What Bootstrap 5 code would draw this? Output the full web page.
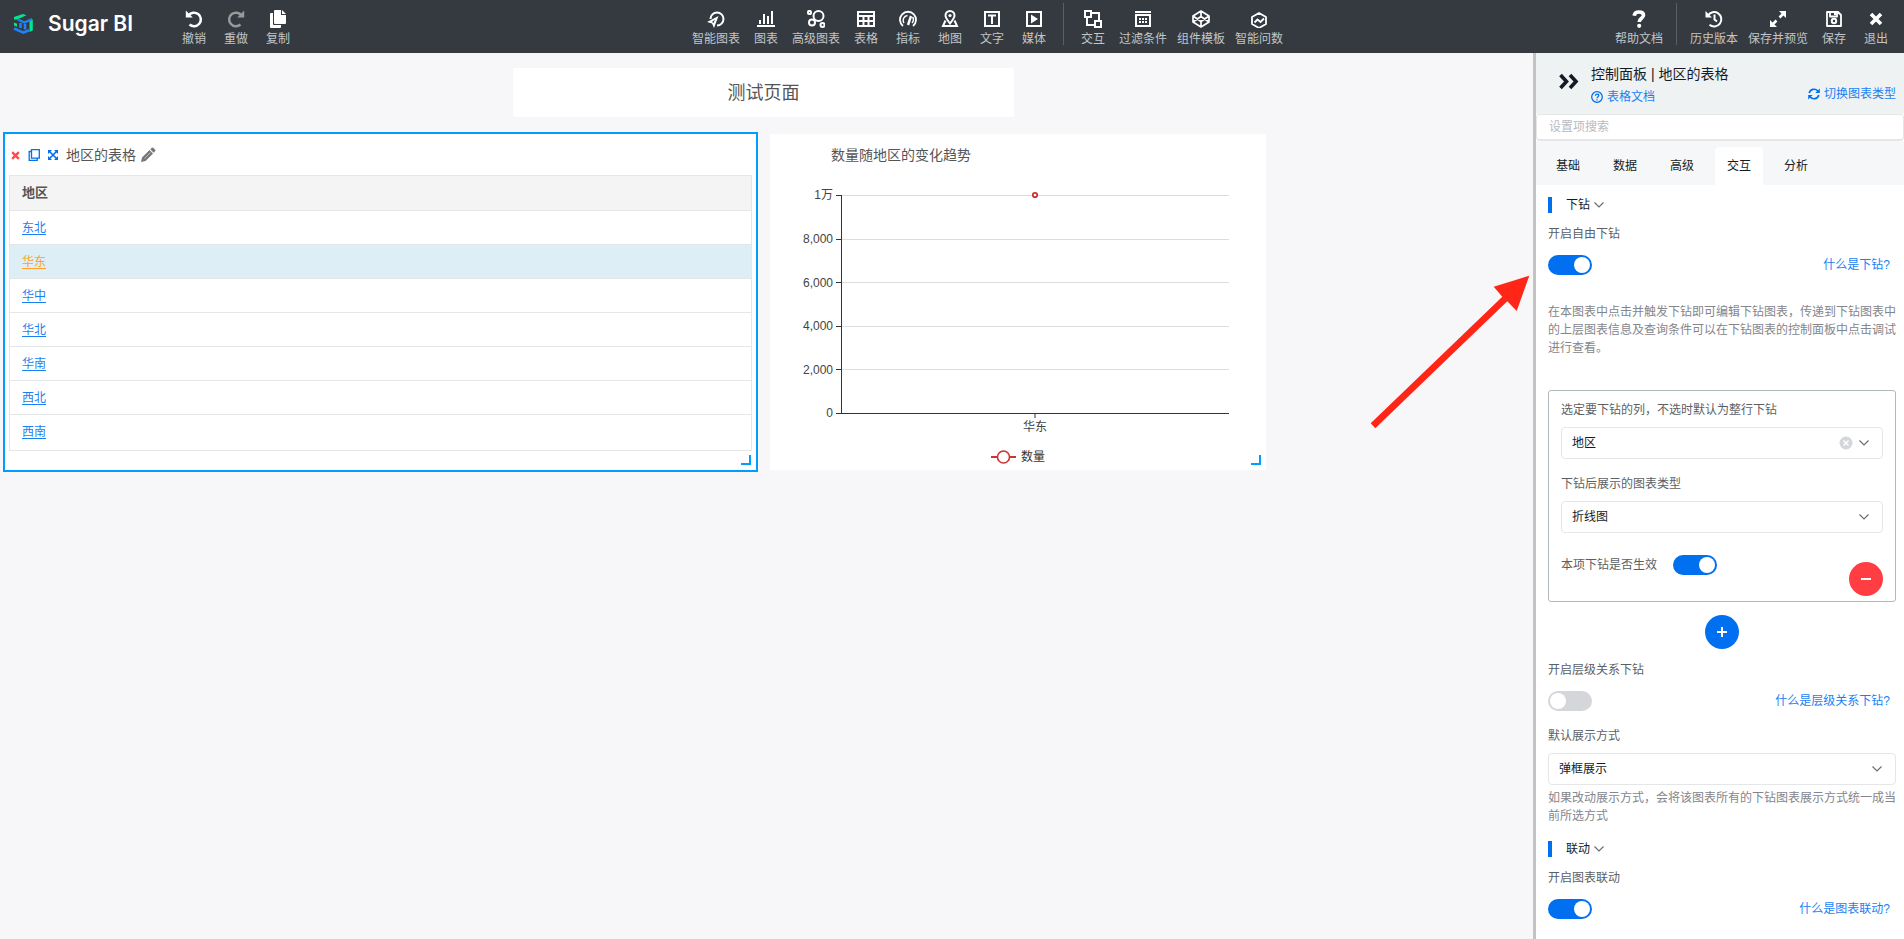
<!DOCTYPE html>
<html lang="zh-CN">
<head>
<meta charset="utf-8">
<meta name="viewport" content="width=device-width, initial-scale=1">
<title>Sugar BI</title>
<link href="https://cdn.jsdelivr.net/npm/bootstrap@5.3.0/dist/css/bootstrap.min.css" rel="stylesheet">
<style>
  :root { --blue: #0070f0; --line: #e5e6e8; }
  body { font-family: "Liberation Sans", "Noto Sans CJK SC", sans-serif; font-size: 12px; line-height: 18px; color: #151b26; background: #f7f7f9; }
  a { color: #1a7ff3; text-decoration: none; }
  svg { display: block; flex: none; }
  .ico { width: 18px; height: 18px; fill: none; stroke: currentColor; stroke-width: 2; }
  .solid { fill: currentColor; stroke: none; }

  .topbar { background: #343a40; min-height: 53px; padding: 0 7px 0 12px; }
  .brand { width: 161px; font: 600 21px/24px Inter, sans-serif; color: #fff; gap: 14px; padding-top: 12px; }
  .tool { min-width: 42px; padding: 10px 5px 0; border: 0; background: none; color: #fff; line-height: 16px; gap: 3px; }
  .tool span { color: #c3c5c7; white-space: nowrap; }
  .tool:disabled { color: #999; }
  .divider { width: 1px; height: 42px; margin: 3px 8px 0; background: #5c6064; }
  .tools-mid { padding-left: 66px; }

  .canvas { padding: 15px 0 20px 5px; }
  .title-row { display: grid; grid-template-columns: 508fr 501fr 519fr; }
  .page-title { grid-column: 2; font-size: 18px; line-height: 24px; font-weight: 400; color: #555; padding: 13px 0 12px; margin: 0; }
  .widgets { display: grid; grid-template-columns: 751fr 496fr 253fr; gap: 14px; margin-top: 17px; }
  .panel { background: #fff; border-radius: 2px; }
  .widget { position: relative; min-height: 336px; }
  .widget h2 { font-size: 14px; line-height: 20px; color: #555; font-weight: 400; margin: 0; }
  .widget-head { padding: 11px 6px 10px; gap: 8px; }
  .widget-title { padding: 11px 0 0 61px; }
  .picked { border-radius: 0; box-shadow: 0 0 0 2px #009dff; }
  .grip { position: absolute; right: 5px; bottom: 5px; width: 10px; height: 10px; border: solid #009dff; border-width: 0 2px 2px 0; }
  .bare { border: 0; background: none; padding: 0; }
  .data { border: 1px solid var(--line); margin: 0; }
  .data th { background: #f4f4f4; font-size: 13px; font-weight: 700; color: #555; padding: 7px 12px 8px; line-height: 19px; border-color: var(--line); }
  .data td { padding: 8px 12px 7px; border-color: var(--line); }
  .data tbody tr:last-child td { padding-bottom: 9px; border-bottom: 0; }
  .data a { text-decoration: underline; text-underline-offset: 2px; }
  .data .current td { background: #ddeef6; }
  .data .current a { color: #ffa126; }
  .plot { margin: 30px 37px 0 71px; }
  .plot svg { width: 100%; height: 236px; overflow: visible; }
  .plot text { font-size: 12px; fill: #444; }
  .legend-row { padding-top: 17px; gap: 5px; color: #333; }
  .pointer { position: absolute; right: 3px; top: 222px; pointer-events: none; }

  .side { flex: 0 0 371px; border-left: 3px solid #c3c3c3; background: #fff; }
  .side-head { background: #eef2f3; min-height: 61px; padding: 11px 8px 0 22px; }
  .side-head h1 { font-size: 14px; line-height: 20px; font-weight: 400; margin: 0 0 4px; }
  .swap { padding-top: 21px; }
  .search { border: 1px solid var(--line); border-bottom-width: 2px; border-radius: 4px; padding: 3px 12px; font-size: 12px; line-height: 18px; height: 27px; color: #151b26; }
  .search::placeholder { color: #b8babf; }
  .side-tabs { background: #f6f7f9; padding: 6px 8px 0; gap: 9px; }
  .side-tabs .nav-link { width: 48px; padding: 10px 0; text-align: center; color: #151b26; border-radius: 4px 4px 0 0; }
  .side-tabs .nav-link.active { background: #fff; color: #151b26; }
  .side-body { padding: 12px 8px 16px 12px; color: #5c5f66; }
  .sec { border: 0; border-left: 4px solid var(--blue); background: none; padding: 0 0 0 14px; line-height: 16px; color: #151b26; display: flex; align-items: center; gap: 4px; }
  .sec svg { fill: none; stroke: #6b6d73; stroke-width: 1.2; }
  .switch-row { padding-right: 6px; margin-top: 12px; height: 20px; }
  .form-switch { padding: 0; min-height: 20px; margin: 0; }
  .form-switch .form-check-input { display: block; float: none; width: 44px; height: 20px; margin: 0; border: 0; background-color: #d4d6da; background-image: url("data:image/svg+xml,%3csvg xmlns='http://www.w3.org/2000/svg' viewBox='-10 -10 20 20'%3e%3ccircle r='8' fill='%23fff'/%3e%3c/svg%3e"); }
  .form-switch .form-check-input:checked { background-color: var(--blue); background-image: url("data:image/svg+xml,%3csvg xmlns='http://www.w3.org/2000/svg' viewBox='-10 -10 20 20'%3e%3ccircle r='8' fill='%23fff'/%3e%3c/svg%3e"); }
  .lbl { display: block; margin-top: 12px; }
  .tip { color: #84868c; margin: 4px 0 16px; }
  .tip-wide { margin: 28px 0 0; }
  .pick { height: 32px; margin-top: 8px; padding: 6px 30px 6px 10px; font-size: 12px; line-height: 18px; color: #151b26; border: 1px solid var(--line); border-radius: 4px; background-position: right 13px center; background-size: 10px 6px; background-image: url("data:image/svg+xml,%3csvg xmlns='http://www.w3.org/2000/svg' viewBox='0 0 10 6'%3e%3cpath d='M.5.5 5 5 9.500.5' fill='none' stroke='%236b6d73' stroke-width='1.2'/%3e%3c/svg%3e"); }
  .clear { position: absolute; right: 30px; bottom: 9px; }
  .drill { border: 1px solid #b2b9bc; border-radius: 3px; padding: 10px 12px 5px; margin-top: 33px; }
  .drill-foot { margin-top: 22px; line-height: 20px; }
  .round { width: 34px; height: 34px; border: 0; border-radius: 50%; background: var(--blue); color: #fff; display: flex; align-items: center; justify-content: center; }
  .round.minus { background: #ff3d42; margin-top: 7px; }
  .round.plus { margin-top: 13px; }
</style>
</head>
<body>
<div class="d-flex flex-column min-vh-100">
  <header class="topbar d-flex align-items-start">
    <div class="brand d-flex align-items-center">
      <svg width="22" height="22" viewBox="0 0 22 22"><path d="M2 6.500V4L11 1l3.500 1.300L5 6.500z" fill="#00e88c"/><path d="m17.500 8 3.300-1.500v11L17.500 19z" fill="#00e88c"/><path d="M6 6.500 12.500 9.500 20 6" fill="none" stroke="#1e82ff" stroke-width="2.400"/><path d="M2 9.500 5 10.800v3L2 12.500z" fill="#00e88c"/><path d="M8.500 10v5M13 11v5.500" fill="none" stroke="#1e82ff" stroke-width="2.600"/><path d="m2 15.500 9.500 4.200 5.500-2.400" fill="none" stroke="#1e82ff" stroke-width="2.600"/></svg>
      <span>Sugar BI</span>
    </div>
    <div class="d-flex">
      <button class="tool d-flex flex-column align-items-center"><svg class="ico" viewBox="0 0 18 18"><path stroke-width="2.500" d="M3.500 5.500A6.800 6.800 0 1 1 4.500 14.500"/><path class="solid" d="M.8.500v7h7z"/></svg><span>撤销</span></button>
      <button class="tool d-flex flex-column align-items-center" disabled><svg class="ico" viewBox="0 0 18 18"><path stroke-width="2.500" d="M14.500 5.500A6.800 6.800 0 1 0 13.500 14.500"/><path class="solid" d="M17.200.500v7h-7z"/></svg><span>重做</span></button>
      <button class="tool d-flex flex-column align-items-center"><svg class="ico solid" viewBox="0 0 18 18"><path d="M5 1q0-1 1-1h6v5h5v8q0 1-1 1H6q-1 0-1-1zM13 0l4 4h-4zM1 4q0-1 1-1h2v11q0 1 1 1h7v2q0 1-1 1H2q-1 0-1-1z"/></svg><span>复制</span></button>
    </div>
    <div class="tools-mid d-flex mx-auto">
      <button class="tool d-flex flex-column align-items-center"><svg class="ico" viewBox="0 0 18 18"><path d="M3.500 9A6.500 6.500 0 1 1 10 15.500"/><path class="solid" fill-rule="evenodd" d="M11.500 6 7 18l-2-4.500L0 12zM8 9.500 5 12l1.500 1z"/></svg><span>智能图表</span></button>
      <button class="tool d-flex flex-column align-items-center"><svg class="ico solid" viewBox="0 0 18 18"><path d="M2 10h2v4H2zM6 4h2v10H6zM10 6h2v8h-2zM14 1h2v13h-2zM0 15h18v2H0z"/></svg><span>图表</span></button>
      <button class="tool d-flex flex-column align-items-center"><svg class="ico" viewBox="0 0 18 18"><circle cx="11.500" cy="6" r="5"/><circle cx="5" cy="12.500" r="3"/><circle cx="2.500" cy="2.500" r="1.600"/><circle cx="15.500" cy="15" r="2"/></svg><span>高级图表</span></button>
      <button class="tool d-flex flex-column align-items-center"><svg class="ico" viewBox="0 0 18 18"><path d="M1 2h16v14H1zM1 6h16M1 11h16M6.500 6v10M11.500 6v10"/></svg><span>表格</span></button>
      <button class="tool d-flex flex-column align-items-center"><svg class="ico" viewBox="0 0 18 18"><path stroke-width="1.800" d="M4 16A8 8 0 1 1 14 16"/><path stroke-width="1.500" d="M5 13A4.800 4.800 0 0 1 8.500 5.500M13.500 7A4.800 4.800 0 0 1 13 13"/><path stroke-width="2.400" d="M9 15 12 6"/></svg><span>指标</span></button>
      <button class="tool d-flex flex-column align-items-center"><svg class="ico" viewBox="0 0 18 18"><path d="M9 13.500C6.500 10 4.500 8 4.500 5.500a4.500 4.500 0 0 1 9 0C13.500 8 11.500 10 9 13.500z"/><circle class="solid" cx="9" cy="5.500" r="1.600"/><path d="M4.500 10.500 2 16h14l-2.500-5.500"/></svg><span>地图</span></button>
      <button class="tool d-flex flex-column align-items-center"><svg class="ico" viewBox="0 0 18 18"><path d="M2 2h14v14H2zM5 5.500h8M9 5.500V14"/></svg><span>文字</span></button>
      <button class="tool d-flex flex-column align-items-center"><svg class="ico" viewBox="0 0 18 18"><path d="M2 2h14v14H2z"/><path class="solid" d="m6 4.500 7 4.500-7 4.500z"/></svg><span>媒体</span></button>
      <div class="divider"></div>
      <button class="tool d-flex flex-column align-items-center"><svg class="ico" viewBox="0 0 18 18"><path d="M1 1h6v6H1zM11 11h6v6h-6zM8 3h7v7M3 8v7h7"/></svg><span>交互</span></button>
      <button class="tool d-flex flex-column align-items-center"><svg class="ico" viewBox="0 0 18 18"><path d="M1 2h16M2 5h14v11H2z"/><path class="solid" d="M5 8h2v2H5zM8 8h2v2H8zM11 8h2v2h-2zM5 11h2v2H5zM8 11h2v2H8zM11 11h2v2h-2z"/></svg><span>过滤条件</span></button>
      <button class="tool d-flex flex-column align-items-center"><svg class="ico" viewBox="0 0 18 18"><path stroke-width="1.700" stroke-linejoin="round" d="M9 1 17 6v6l-8 5-8-5V6zM9 1v5.500M9 11.500V17M1 6l8 5.500L17 6M1 12l8-5.500 8 5.500"/></svg><span>组件模板</span></button>
      <button class="tool d-flex flex-column align-items-center"><svg class="ico" viewBox="0 0 18 18"><path stroke-width="1.800" stroke-linejoin="round" d="m9 3 7 4v7l-7 4-7-4V7z"/><path stroke-width="1.800" d="m4.500 12.500 3-3 3 2.500 3.500-3.500"/></svg><span>智能问数</span></button>
    </div>
    <div class="d-flex">
      <button class="tool d-flex flex-column align-items-center"><svg class="ico" viewBox="0 0 18 18"><path stroke-width="3.600" d="M4.200 5.800C4.500 3 6.500 2 9 2c3 0 4.500 1.500 4.500 3.300 0 3-4.300 3-4.300 6.700"/><circle class="solid" cx="9.200" cy="15.800" r="2.100"/></svg><span>帮助文档</span></button>
      <div class="divider"></div>
      <button class="tool d-flex flex-column align-items-center"><svg class="ico" viewBox="0 0 18 18"><path d="M3 5.500A7.200 7.200 0 1 1 4.500 14.800M9.500 4.500V9.500l2.500 2"/><path class="solid" d="M.5 1v6.500H7z"/></svg><span>历史版本</span></button>
      <button class="tool d-flex flex-column align-items-center"><svg class="ico" viewBox="0 0 18 18"><path stroke-width="2.600" d="m10.500 7.500 4-4M7.500 10.500l-4 4"/><path class="solid" d="M10 1h7v7zM1 10v7h7z"/></svg><span>保存并预览</span></button>
      <button class="tool d-flex flex-column align-items-center"><svg class="ico" viewBox="0 0 18 18"><path stroke-width="1.800" stroke-linejoin="round" d="M2 2h11l3 3v11H2zM5 2v4.500h7V2"/><path class="solid" d="M9 2h2v3H9z"/><circle cx="9" cy="11" r="2.200"/></svg><span>保存</span></button>
      <button class="tool d-flex flex-column align-items-center"><svg class="ico" viewBox="0 0 18 18"><path stroke-width="3.600" d="m4 4 10 10M14 4 4 14"/></svg><span>退出</span></button>
    </div>
  </header>

  <div class="d-flex flex-grow-1">
    <main class="canvas flex-grow-1 position-relative">
      <div class="title-row"><h1 class="page-title panel text-center">测试页面</h1></div>
      <div class="widgets">
        <section class="widget panel picked">
          <div class="widget-head d-flex align-items-center">
            <button class="bare" aria-label="删除"><svg width="9" height="9" viewBox="0 0 9 9"><path d="m1.200 1.200 6.600 6.600M7.800 1.200 1.200 7.800" stroke="#ff4a4f" stroke-width="2.400"/></svg></button>
            <button class="bare" aria-label="复制"><svg width="12" height="12" viewBox="0 0 12 12"><path d="M3.500.7h7.800v8.500H3.500zM3.200 2.500H1.200v8.800h8V9.500" fill="none" stroke="#0070f0" stroke-width="1.300"/></svg></button>
            <button class="bare" aria-label="放大"><svg width="10" height="10" viewBox="0 0 10 10"><path d="M1.500 1.500l7 7M8.500 1.500l-7 7" stroke="#0070f0" stroke-width="1.600"/><path fill="#0070f0" d="M0 0h4L0 4zM10 0v4L6 0zM0 10V6l4 4zM10 10H6l4-4z"/></svg></button>
            <h2>地区的表格</h2>
            <button class="bare" style="margin-left: -4px" aria-label="编辑"><svg width="16" height="16" viewBox="0 0 16 16"><path fill="#777" d="m1 15 1-4.500 7.500-7.500 3.500 3.500L5.500 14zM10.300 2.200 11.800.7q.7-.5 1.400 0l2 2q.6.700 0 1.400l-1.500 1.600z"/><path d="m4.500 11.500 6-6" stroke="#fff" stroke-width=".5"/></svg></button>
          </div>
          <div class="px-1">
            <table class="table data">
              <thead><tr><th scope="col">地区</th></tr></thead>
              <tbody>
                <tr><td><a href="#">东北</a></td></tr>
                <tr class="current"><td><a href="#">华东</a></td></tr>
                <tr><td><a href="#">华中</a></td></tr>
                <tr><td><a href="#">华北</a></td></tr>
                <tr><td><a href="#">华南</a></td></tr>
                <tr><td><a href="#">西北</a></td></tr>
                <tr><td><a href="#">西南</a></td></tr>
              </tbody>
            </table>
          </div>
          <span class="grip"></span>
        </section>
        <section class="widget panel">
          <h2 class="widget-title">数量随地区的变化趋势</h2>
          <div class="plot">
            <svg>
              <g stroke="#dcdcdc"><line x1="0" x2="100%" y1=".5" y2=".5"/><line x1="0" x2="100%" y1="44.500" y2="44.500"/><line x1="0" x2="100%" y1="87.500" y2="87.500"/><line x1="0" x2="100%" y1="131.500" y2="131.500"/><line x1="0" x2="100%" y1="174.500" y2="174.500"/></g>
              <path d="M.5 0v219M-5 .5H0M-5 44.500H0M-5 87.500H0M-5 131.500H0M-5 174.500H0M-5 218.500H0" stroke="#333" fill="none"/>
              <line x1="0" x2="100%" y1="218.500" y2="218.500" stroke="#333"/>
              <line x1="50%" x2="50%" y1="219" y2="223" stroke="#333"/>
              <circle cx="50%" cy="0" r="2.200" fill="#fff" stroke="#cc3333" stroke-width="1.800"/>
              <g text-anchor="end"><text x="-8" y="4">1万</text><text x="-8" y="48">8,000</text><text x="-8" y="92">6,000</text><text x="-8" y="135">4,000</text><text x="-8" y="179">2,000</text><text x="-8" y="222">0</text></g>
              <text x="50%" y="236" text-anchor="middle">华东</text>
            </svg>
          </div>
          <div class="legend-row d-flex justify-content-center align-items-center">
            <svg width="25" height="14" viewBox="0 0 25 14"><path d="M0 7h25" stroke="#cc3333" stroke-width="2"/><circle cx="12.500" cy="7" r="6" fill="#fff" stroke="#cc3333" stroke-width="1.600"/></svg>
            <span>数量</span>
          </div>
          <span class="grip"></span>
        </section>
      </div>
      <svg class="pointer" width="160" height="154" viewBox="0 0 160 154"><path fill="#ff2617" d="m.7 148.300 131.600-126.600-8.600-10L159.300.7 146.700 36l-9.400-9.700L5.300 153.300z"/></svg>
    </main>

    <aside class="side">
      <div class="side-head d-flex">
        <button class="bare align-self-start pt-2" aria-label="收起"><svg width="21" height="20" viewBox="0 0 21 20"><path d="m2.500 3 6 6.500-6 6.500M12 3l6 6.500-6 6.500" fill="none" stroke="#151b26" stroke-width="3.600"/></svg></button>
        <div class="ms-2 ps-1">
          <h1>控制面板 | 地区的表格</h1>
          <a href="#" class="d-flex align-items-center gap-1"><svg width="12" height="12" viewBox="0 0 12 12" fill="none" stroke="#0070f0" stroke-width="1.300"><circle cx="6" cy="6" r="5.300"/><path d="M4.300 4.800c0-2.300 3.500-2.300 3.500-.3C7.800 5.700 6 5.800 6 7.300M6 8.200v1.200"/></svg>表格文档</a>
        </div>
        <a href="#" class="swap ms-auto d-flex align-items-center align-self-start gap-1"><svg width="12" height="12" viewBox="0 0 12 12"><path d="M1.200 5A5 5 0 0 1 9.800 3M10.800 7A5 5 0 0 1 2.200 9" fill="none" stroke="#0070f0" stroke-width="1.700"/><path fill="#0070f0" d="M11.800.5v4.500H7.300zM.2 11.500V7h4.500z"/></svg>切换图表类型</a>
      </div>
      <input class="search form-control" type="search" placeholder="设置项搜索" aria-label="设置项搜索">
      <nav class="side-tabs nav">
        <a class="nav-link" href="#">基础</a><a class="nav-link" href="#">数据</a><a class="nav-link" href="#">高级</a><a class="nav-link active" href="#" aria-current="page">交互</a><a class="nav-link" href="#">分析</a>
      </nav>
      <div class="side-body">
        <button class="sec">下钻<svg width="10" height="6" viewBox="0 0 10 6"><path d="M.5.500 5 5 9.500.500"/></svg></button>
        <label class="lbl" for="free">开启自由下钻</label>
        <div class="switch-row d-flex justify-content-between align-items-center">
          <div class="form-check form-switch"><input class="form-check-input" type="checkbox" role="switch" id="free" checked></div>
          <a href="#">什么是下钻?</a>
        </div>
        <p class="tip tip-wide">在本图表中点击并触发下钻即可编辑下钻图表，传递到下钻图表中的上层图表信息及查询条件可以在下钻图表的控制面板中点击调试进行查看。</p>
        <div class="drill">
          <div class="position-relative">
            <label class="d-block" for="col">选定要下钻的列，不选时默认为整行下钻</label>
            <select class="pick form-select" id="col"><option>地区</option></select>
            <button class="bare clear" aria-label="清除"><svg width="14" height="14" viewBox="0 0 14 14"><circle cx="7" cy="7" r="6.500" fill="#d4d6da"/><path d="m4.500 4.500 5 5M9.500 4.500l-5 5" stroke="#fff" stroke-width="1.400"/></svg></button>
          </div>
          <label class="d-block mt-3" for="kind">下钻后展示的图表类型</label>
          <select class="pick form-select" id="kind"><option>折线图</option></select>
          <div class="drill-foot d-flex">
            <label for="enabled">本项下钻是否生效</label>
            <div class="form-check form-switch ms-3"><input class="form-check-input" type="checkbox" role="switch" id="enabled" checked></div>
            <button class="round minus ms-auto" aria-label="移除"><svg width="12" height="12" viewBox="0 0 12 12"><path d="M1 6h10" stroke="#fff" stroke-width="2"/></svg></button>
          </div>
        </div>
        <button class="round plus mx-auto" aria-label="添加"><svg width="12" height="12" viewBox="0 0 12 12"><path d="M1 6h10M6 1v10" stroke="#fff" stroke-width="2"/></svg></button>
        <label class="lbl" for="level">开启层级关系下钻</label>
        <div class="switch-row d-flex justify-content-between align-items-center">
          <div class="form-check form-switch"><input class="form-check-input" type="checkbox" role="switch" id="level"></div>
          <a href="#">什么是层级关系下钻?</a>
        </div>
        <label class="d-block mt-3" for="mode">默认展示方式</label>
        <select class="pick form-select" id="mode"><option>弹框展示</option></select>
        <p class="tip">如果改动展示方式，会将该图表所有的下钻图表展示方式统一成当前所选方式</p>
        <button class="sec">联动<svg width="10" height="6" viewBox="0 0 10 6"><path d="M.5.500 5 5 9.500.500"/></svg></button>
        <label class="lbl" for="link">开启图表联动</label>
        <div class="switch-row d-flex justify-content-between align-items-center">
          <div class="form-check form-switch"><input class="form-check-input" type="checkbox" role="switch" id="link" checked></div>
          <a href="#">什么是图表联动?</a>
        </div>
      </div>
    </aside>
  </div>
</div>
<script src="https://cdn.jsdelivr.net/npm/bootstrap@5.3.0/dist/js/bootstrap.bundle.min.js"></script>
</body>
</html>
